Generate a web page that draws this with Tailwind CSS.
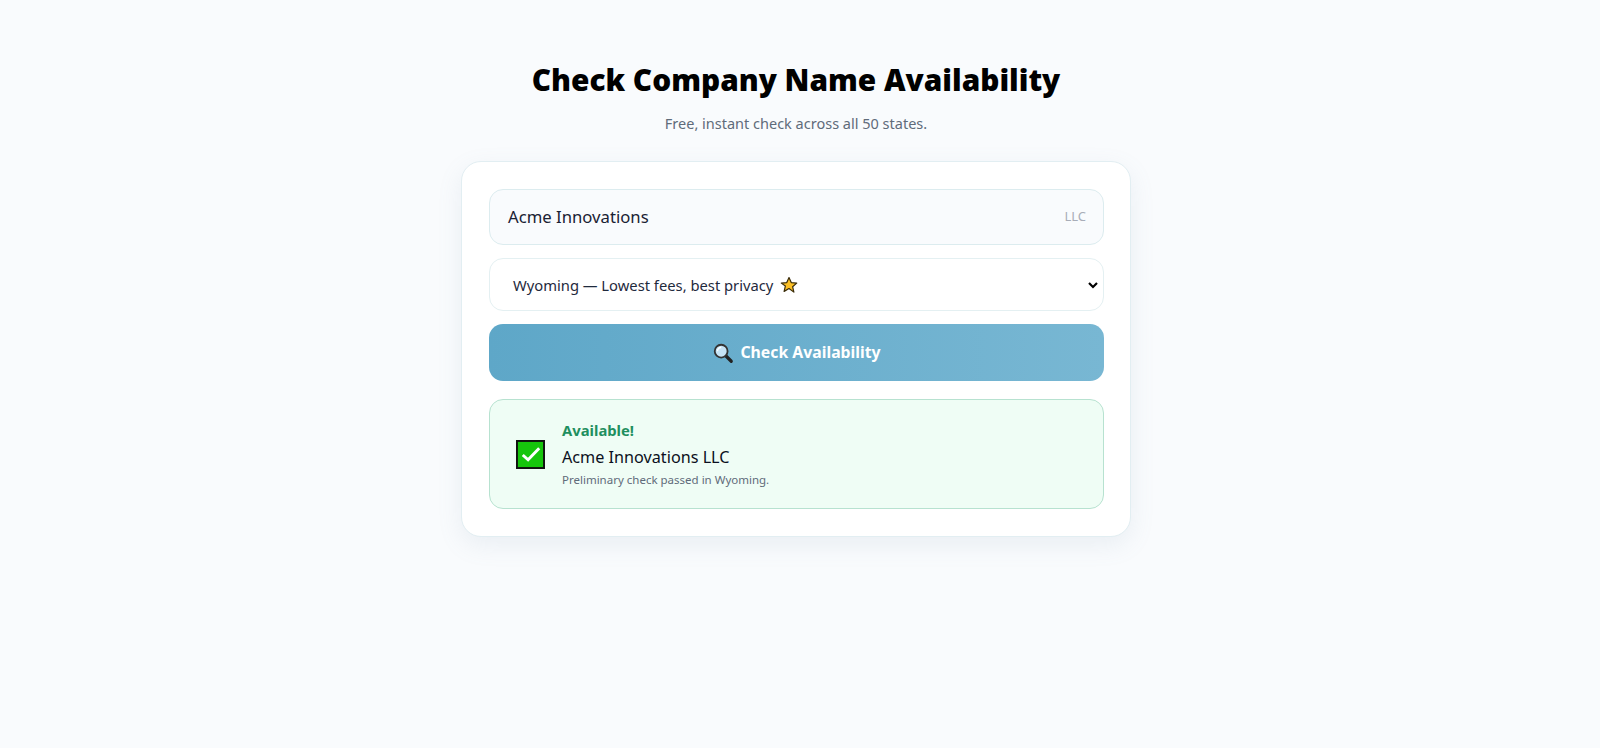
<!DOCTYPE html>
<html lang="en">
<head>
    <meta charset="UTF-8">
    <meta name="viewport" content="width=device-width, initial-scale=1.0">
    <title>Check Company Name Availability</title>
    <script src="https://cdn.jsdelivr.net/npm/@tailwindcss/browser@4"></script>
</head>
<body class="bg-[#f9fbfd] min-h-screen font-['Noto_Sans',sans-serif] overflow-hidden">
    <main class="w-[1592px] flex flex-col items-center pt-[58px]">
        <h1 class="text-[29.8px] leading-[44px] font-black text-black">Check Company Name Availability</h1>
        <p class="mt-[10px] text-[14.5px] leading-[22px] text-[#5f6b7a]">Free, instant check across all 50 states.</p>

        <!-- card -->
        <div class="mt-[27px] w-[670px] h-[376px] bg-white border border-[#e2eef2] rounded-[20px] pl-[27px] pr-[26px] pt-[27px] shadow-[0_8px_24px_rgba(120,150,170,0.12)] flex flex-col">
            <div class="h-[56px] flex items-center justify-between pl-[18px] pr-[17px] bg-[#f9fbfd] border border-[#dcecef] rounded-[14px]">
                <span class="text-[16.7px] text-[#1a2233]">Acme Innovations</span>
                <span class="text-[13px] text-[#a8adb8]">LLC</span>
            </div>

            <div class="mt-[13px] h-[53px] flex items-center justify-between pl-[23px] pr-[4px] pt-[1px] bg-white border border-[#e4f0f2] rounded-[14px]">
                <span class="flex items-center gap-[7px] text-[14.75px] text-[#1f2a3d]">
                    Wyoming — Lowest fees, best privacy
                    <svg width="18" height="18" viewBox="0 0 24 24"><path d="M12 2l3 6.8 7.3.7-5.500 4.800 1.700 7.200L12 16.800 5.500 20.500l1.700-7.200L1.700 9.500 9 8.800z" fill="#fbbf24" stroke="#3a2c0a" stroke-width="1.600" stroke-linejoin="round"/></svg>
                </span>
                <svg width="12" height="12" viewBox="0 0 12 12" fill="none" stroke="#000" stroke-width="2.200"><path d="M2 4l4 4 4-4"/></svg>
            </div>

            <button class="mt-[13px] h-[57px] flex items-center justify-center gap-[6px] rounded-[14px] bg-gradient-to-r from-[#5ea7c8] to-[#78b7d3] text-white text-[15.8px] font-bold">
                <svg width="22" height="22" viewBox="0 0 24 24" fill="none"><path d="M15 15l6 6" stroke="#222" stroke-width="3.500" stroke-linecap="round"/><circle cx="10" cy="10" r="7" fill="#c6e3f5" stroke="#333" stroke-width="2"/><path d="M6 10a4 4 0 0 1 4-4" stroke="#fff" stroke-width="1.500"/></svg>
                Check Availability
            </button>

            <div class="mt-[18px] h-[110px] flex items-center gap-[17px] pl-[26px] bg-[#effdf5] border border-[#b7e2d0] rounded-[14px]">
                <svg width="29" height="29" viewBox="0 0 30 30" class="shrink-0"><rect x="1" y="1" width="28" height="28" fill="#16c60c" stroke="#111" stroke-width="2"/><path d="M7 15.500l5.500 5L24 8.500" fill="none" stroke="#fff" stroke-width="3"/></svg>
                <div class="flex flex-col">
                    <span class="text-[14.8px] leading-[20px] font-bold text-[#1f8f5f]">Available!</span>
                    <span class="mt-[5px] text-[16.2px] leading-[24px] text-[#0b1020]">Acme Innovations LLC</span>
                    <span class="mt-[3px] text-[11.5px] leading-[16px] text-[#5f6b7a]">Preliminary check passed in Wyoming.</span>
                </div>
            </div>
        </div>
    </main>
</body>
</html>
